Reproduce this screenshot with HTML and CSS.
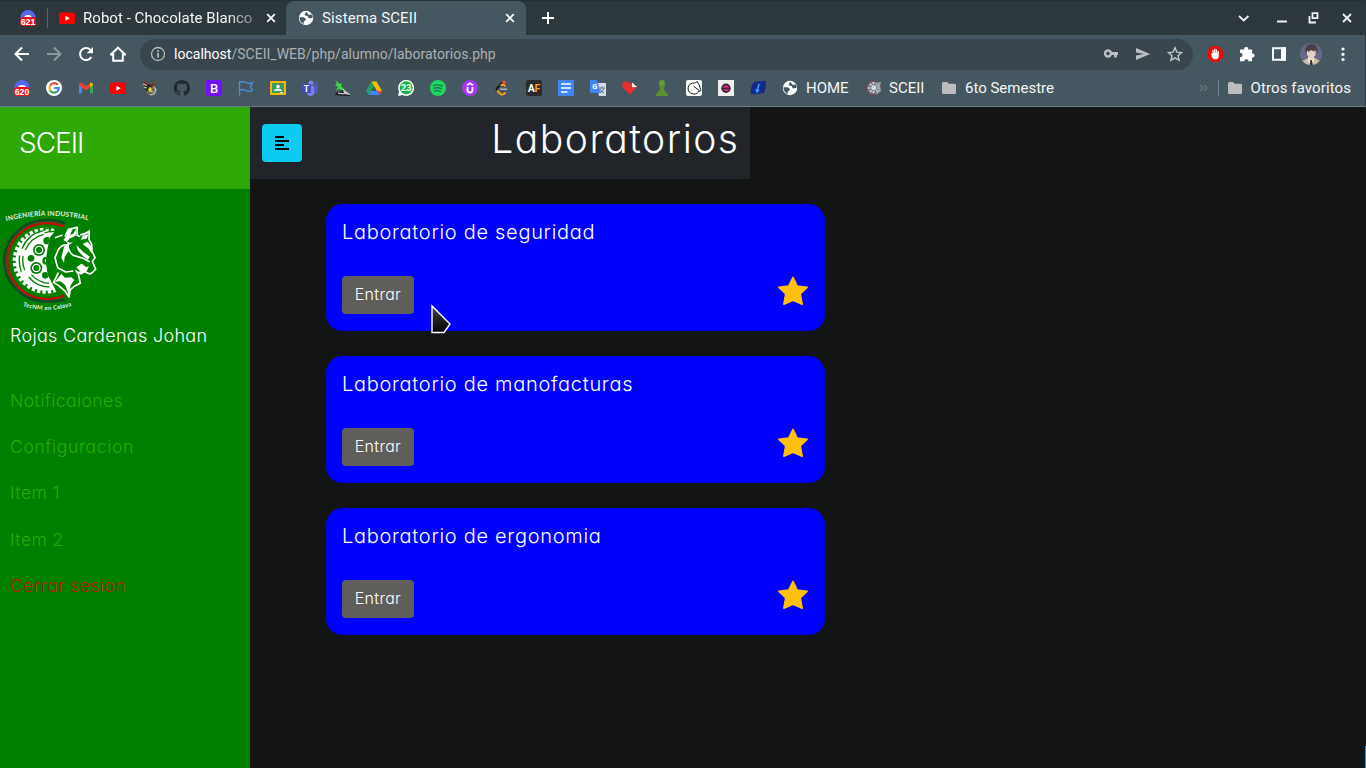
FILE: index.html
```html
<!DOCTYPE html>
<html lang="es">
<head>
<meta charset="utf-8">
<title>Sistema SCEII</title>
<link rel="stylesheet" href="styles.css">
</head>
<body>
<svg class="defs" width="0" height="0">
  <symbol id="globe" viewBox="0 0 16 16"><circle cx="8" cy="8" r="7.2" fill="#fff"/><path d="M1.500 7.200h4.200l2 1.600v1.400l-2 1.200v2.600C3.500 13 1.700 10.800 1.500 8zM8.500 1.700 6.500 4.300l.8 1.300 2.300.4 1.200 2.200h2.400l1.600-.8c-.2-1.300-.7-2.300-1.500-3.200l-2 .9-1-.5z" fill="#455760"/></symbol>
  <symbol id="folder" viewBox="0 0 16 16"><path d="M1 3.500Q1 2 2.500 2H6l1.700 1.700h6q1.300 0 1.300 1.300v7.500q0 1.500-1.500 1.500h-11Q1 14 1 12.500z" fill="#bdbdbd"/></symbol>
  <symbol id="youtube" viewBox="0 0 16 16"><rect y="2.500" width="16" height="11.500" rx="2.500" fill="#f00"/><path d="M6.400 5.700v5l4.400-2.500z" fill="#fff"/></symbol>
  <symbol id="star" viewBox="0 0 30 30"><path d="M15 1.300 19.200 9.900 29.200 11.200 22.300 18 24.200 28.200 15 24.200 5.800 28.200 7.700 18 .8 11.200 10.800 9.900z" fill="#ffc107" stroke="#ffc107" stroke-width="1.500" stroke-linejoin="round"/></symbol>
  <symbol id="discord" viewBox="0 0 16 16"><circle cx="8" cy="7.500" r="7.500" fill="#5865f2"/><path d="M4.500 6q3.500-2 7 0v3h-7z" fill="#fff"/><rect y="7" width="16" height="9" rx="3.200" fill="#e8111a"/></symbol>
</svg>

<header class="browser">
  <div class="tabs">
    <div class="pinned"><svg width="16" height="16"><use href="#discord"/><text x="8" y="14.500" class="badge">621</text></svg></div>
    <div class="tab tab-robot">
      <svg width="16" height="16"><use href="#youtube"/></svg>
      <span class="tab-name fade">Robot - Chocolate Blanco</span>
      <svg class="close" width="10" height="10" viewBox="0 0 10 10"><path d="M1.200 1.200l7.600 7.600m0-7.600L1.200 8.800"/></svg>
    </div>
    <div class="tab tab-active">
      <svg width="16" height="16"><use href="#globe"/></svg>
      <span class="tab-name sist">Sistema SCEII</span>
      <svg class="close" width="10" height="10" viewBox="0 0 10 10"><path d="M1.200 1.200l7.600 7.600m0-7.600L1.200 8.800"/></svg>
    </div>
    <svg class="plus" width="12" height="12" viewBox="0 0 12 12"><path d="M6 0v12M0 6h12"/></svg>
    <div class="window-controls">
      <svg width="122" height="20" viewBox="0 0 122 20"><g fill="none" stroke="#f1f3f4" stroke-width="1.800"><path d="M5 8l4.700 4.500L14.400 8M43 13.500h10"/><path d="M78.500 5.200h5v5h-5zM75.500 8v6.500h6.500"/><path d="M109 6l8 8m0-8l-8 8"/></g></svg>
    </div>
  </div>

  <div class="toolbar">
    <div class="nav">
      <svg width="16" height="16" viewBox="0 0 16 16"><path d="M15 8H2M8 1.500 1.500 8 8 14.500" class="ico"/></svg>
      <svg width="16" height="16" viewBox="0 0 16 16"><path d="M1 8h13M8 1.500 14.500 8 8 14.500" class="ico dim"/></svg>
      <svg width="16" height="16" viewBox="0 0 16 16"><path d="M13.300 11A6 6 0 1 1 12.300 3.800" class="ico"/><path d="M15 1v6.300H8.700z" fill="#fff"/></svg>
      <svg width="16" height="16" viewBox="0 0 16 16"><path d="M.9 8.500 8 1.700l7.100 6.800h-2.300v6.300H3.200V8.500z" class="ico"/></svg>
    </div>
    <div class="address">
      <svg width="16" height="16" viewBox="0 0 16 16"><circle cx="8" cy="8" r="6.500" fill="none" stroke="#b4babd" stroke-width="1.300"/><path d="M8 7v4.500M8 4.300V6" stroke="#c4c9cb" stroke-width="1.600"/></svg>
      <span class="url"><b>localhost</b>/SCEII_WEB/php/alumno/laboratorios.php</span>
      <div class="address-icons">
        <svg width="16" height="16" viewBox="0 0 16 16"><circle cx="5" cy="7.500" r="3" fill="none" stroke="#bcc1c3" stroke-width="2.400"/><path d="M8 7.500h7M12.500 8v3.500" stroke="#bcc1c3" stroke-width="2.800"/></svg>
        <svg width="16" height="16" viewBox="0 0 16 16"><path d="M1 2l14 6-14 6V9.500L9 8 1 6.500z" fill="#bcc1c3"/></svg>
        <svg width="16" height="16" viewBox="0 0 16 16"><path d="M8 1.800l1.900 4.400 4.700.4-3.600 3.100 1.100 4.600L8 11.900l-4.100 2.400L5 9.700 1.400 6.600l4.700-.4z" fill="none" stroke="#c4c8ca" stroke-width="1.400"/></svg>
      </div>
    </div>
    <div class="extensions">
      <svg width="16" height="16" viewBox="0 0 16 16"><path d="M4.700 0h6.600L16 4.700v6.600L11.300 16H4.700L0 11.300V4.700z" fill="#e50d0d"/><path d="M4 7.500q.8-.6 1.400.5V4.100q.8-.8 1.300 0V7h.4V2.900q.7-.8 1.300 0V7h.4V3.400q.8-.7 1.300 0v4h.4V5q.8-.7 1.300 0v4.500q0 4-3.700 4-2.500 0-3.300-2.700z" fill="#fff"/></svg>
      <svg width="16" height="16" viewBox="0 0 16 16"><path d="M1 3.500h4.200a2 2 0 1 1 3.900 0h4v4a2 2 0 1 1 0 3.900v3.900H9.500a2.100 2.100 0 1 0-4.200 0H1v-4.200a2.100 2.100 0 1 0 0-4.100z" fill="#fff"/></svg>
      <svg width="16" height="16" viewBox="0 0 16 16"><path d="M2 2.200h12v11.600H2z" fill="none" stroke="#fff" stroke-width="2"/><path d="M10 1.500h5v13h-5z" fill="#fff"/></svg>
      <svg width="22" height="22" viewBox="0 0 22 22"><clipPath id="av"><circle cx="11" cy="11" r="11"/></clipPath><g clip-path="url(#av)"><path fill="#67678a" d="M0 0h22v22H0z"/><path d="M1 22l1-4 6-3h7l5 3 1 4z" fill="#c9c0a2"/><path d="M8 14h6v5l-3 2-3-2z" fill="#f0dfd3"/><path d="M10.300 17h1.500l1 5h-3z" fill="#26344a"/><path d="M7 6h8.500v6L12 16h-1.500L7 12z" fill="#e9cfc1"/><path d="M5 10Q4 2 11 1t7 9l-2.500-3-1.500 1.500L11 7 8.500 9l-1-1.500z" fill="#4a4144"/></g></svg>
      <svg width="6" height="16" viewBox="0 0 6 16" fill="#fff"><circle cx="3" cy="3" r="1.600"/><circle cx="3" cy="8.300" r="1.600"/><circle cx="3" cy="13.600" r="1.600"/></svg>
    </div>
  </div>

  <div class="bookmarks">
    <svg viewBox="0 0 16 16"><use href="#discord"/><text x="8" y="14.500" class="badge">620</text></svg>
    <svg viewBox="0 0 16 16"><circle cx="8" cy="8" r="8" fill="#fff"/><g fill="none" stroke-width="2.200"><path d="M11.700 4.800A4.700 4.700 0 0 0 4 5.700" stroke="#ea4335"/><path d="M4 5.700a4.700 4.700 0 0 0 0 4.600" stroke="#fbbc04"/><path d="M4 10.300a4.700 4.700 0 0 0 7 1.300" stroke="#34a853"/><path d="M11 11.600A4.500 4.500 0 0 0 12.700 8H8.200" stroke="#4285f4"/></g></svg>
    <svg viewBox="0 0 16 16"><path d="M1 4v9.500h3V7z" fill="#4285f4"/><path d="M12 7v6.500h3V4z" fill="#34a853"/><path d="M1 4.500Q1.500 2 4 3l4 3.200L12 3v4.500l-4 3-7-5z" fill="#ea4335"/><path d="M12 3q3-.8 3 2l-3 2.500z" fill="#fbbc04"/></svg>
    <svg viewBox="0 0 16 16"><use href="#youtube"/></svg>
    <svg viewBox="0 0 16 16"><circle cx="9" cy="10" r="5.500" fill="#676860"/><path d="M0 2l3-.5 4 3.500 3-1 5-3.500-1 3-3 3-4-1-4 0z" fill="#8f2822"/><path d="M2 5l5-1 3 2-2 4-4 1z" fill="#20251c"/><path d="M1 4l4 1.500M2 7l3 1m7-1 2 3-2 4-4 1m1-4 2 1" stroke="#c9c9bb" fill="none" stroke-width="1.200"/><path d="M8 6.500l2 3-2 3-2-3z" fill="#e9d91f"/><path d="M12 3l3-2" stroke="#48782d" stroke-width="1.500"/></svg>
    <svg viewBox="0 0 16 16"><path fill="#24292f" d="M8 0C3.580 0 0 3.580 0 8c0 3.540 2.290 6.530 5.470 7.590.4.070.55-.17.55-.38v-1.490c-2.010.37-2.530-.49-2.690-.94-.090-.23-.48-.94-.82-1.130-.28-.15-.68-.52-.01-.53.63-.01 1.080.58 1.230.82.72 1.210 1.870.87 2.330.66.070-.52.28-.87.51-1.070-1.780-.2-3.640-.89-3.640-3.950 0-.87.31-1.590.82-2.150-.08-.2-.36-1.020.08-2.120 0 0 .67-.21 2.200.82a7.400 7.400 0 0 1 4 0c1.530-1.040 2.200-.82 2.200-.82.44 1.100.16 1.920.08 2.120.51.56.82 1.270.82 2.150 0 3.070-1.870 3.750-3.650 3.950.29.25.54.73.54 1.480v2.200c0 .21.150.46.55.38A8.010 8.010 0 0 0 16 8c0-4.420-3.580-8-8-8z"/></svg>
    <svg viewBox="0 0 16 16"><rect width="16" height="16" rx="2" fill="#7211f8"/><text x="8" y="12.600" class="mark medium" font-size="13">B</text></svg>
    <svg viewBox="0 0 16 16"><path d="M1.500 1v14.500M1.500 2.500q3.500-1.700 6.500 0t6.500 0l-2 4 2 4q-3.500 1.700-6.500 0t-6.500 0" fill="none" stroke="#4a8fe7" stroke-width="1.300"/></svg>
    <svg viewBox="0 0 16 16"><path fill="#f6b900" d="M0 1h16v14H0z"/><path fill="#3f9a62" d="M2 3h12v10H2z"/><circle cx="8" cy="6.500" r="1.700" fill="#fff"/><path d="M4 11q0-2.500 4-2.500t4 2.500z" fill="#d8f1e3"/><path fill="#d8dfd0" d="M10 12h3v1.500h-3z"/></svg>
    <svg viewBox="0 0 16 16"><circle cx="9" cy="3" r="2.500" fill="#7b83eb"/><circle cx="14" cy="4" r="1.700" fill="#5059c9"/><path d="M5 6h8v6q-1 4-4.500 4T5 12z" fill="#7b83eb"/><path d="M12 6h4v5q-1 3-4 2z" fill="#5059c9"/><path fill="#434bb5" d="M0 4h9v9H0z"/><text x="4.500" y="11.500" class="mark" font-size="8.500">T</text></svg>
    <svg viewBox="0 0 16 16"><path d="M1 0l5 4 2-1-1 3 4 4H8l-3-1-3 2 2-4L1 5l2-1z" fill="#3fdb45"/><path d="M1 15q1-4 5-3l3-2 2 3 5 1v2H9z" fill="#252525"/><path d="M9 9l4 3 3 2v1l-6-1z" fill="#c4c4c4"/><path d="M4 13l6 1" stroke="#eee"/></svg>
    <svg viewBox="0 0 16 16"><path d="M5.500 1.500h5L5 11l-2.500 4L0 11z" fill="#24a359"/><path d="M5.500 1.500h5L16 11h-5z" fill="#fbbc04"/><path d="M5 11h11l-2.500 4h-11z" fill="#4285f4"/><path d="M11 11h5l-2.500 4z" fill="#ea4335"/></svg>
    <svg viewBox="0 0 16 16"><path d="M0 16l1-4.500A8 8 0 1 1 4.500 15z" fill="#fff"/><circle cx="8.200" cy="7.800" r="6.500" fill="#12b84f"/><text x="8.200" y="11" class="mark" font-size="9">23</text></svg>
    <svg viewBox="0 0 16 16"><circle cx="8" cy="8" r="8" fill="#1ed760"/><path d="M3 5.600q5-1.600 10 .7M3.500 8.300q4.500-1.400 8.500.7M4 10.900q3.500-1 7 .7" stroke="#24704a" stroke-width="1.300" fill="none"/></svg>
    <svg viewBox="0 0 16 16"><circle cx="8" cy="8" r="8" fill="#a435f0"/><path d="M5 5.300l3-2 3 2M5.500 7v3q0 2.500 2.500 2.500t2.500-2.500V7" fill="none" stroke="#fff" stroke-width="1.800"/></svg>
    <svg viewBox="0 0 16 16"><path d="M9.500 1.500 3 8q-1 1.500 0 3" fill="none" stroke="#191919" stroke-width="1.800"/><path d="M3 10.500 6.500 14q2 1.500 4-.5l1-1M6.500 5.500q3-2 5 1" fill="none" stroke="#f5a31a" stroke-width="1.800"/><path d="M6 9.200h7" stroke="#b3b3b3" stroke-width="1.600"/><circle cx="10" cy="2.200" r="2" fill="#d9534f"/></svg>
    <svg viewBox="0 0 16 16"><rect width="16" height="16" rx="2.500" fill="#2a2a2a"/><text x="5.300" y="12" class="mark" font-size="10.500">A</text><text x="11.500" y="12" class="mark orange" font-size="10.500">F</text></svg>
    <svg viewBox="0 0 16 16"><rect width="16" height="16" rx="1" fill="#4285f4"/><path d="M3 4h10M3 8h10M3 12h6.500" stroke="#fff" stroke-width="1.700"/></svg>
    <svg viewBox="0 0 16 16"><path fill="#d7dce0" d="M7 3h9v13H9z"/><path d="M9.500 8H15M12 6.500V8m2 0q-1 4-4 5m0-4q1 3 4 4" stroke="#61747f" fill="none"/><path d="M0 0h7l4 13H1l-1-1z" fill="#4285f4"/><text x="4.700" y="9" class="mark" font-size="7.500">G</text></svg>
    <svg viewBox="0 0 16 16"><path d="M8 14.500 1 8Q-1.500 3 3 1.500q3-.7 5 2 3-2 7 3.500z" fill="#e92e2e"/><path d="M10 2.500v4.700l5-.2z" fill="#fff"/></svg>
    <svg viewBox="0 0 16 16"><circle cx="8" cy="3" r="3" fill="#679b38"/><path d="M4 5.500h8L10 7.500q0 3.500 4 6.500v2H2v-2q4-3 4-6.500z" fill="#5a8f31"/></svg>
    <svg viewBox="0 0 16 16"><rect width="16" height="16" rx="2" fill="#fff"/><path d="M13 4.500 11 1.500 9.500 3Q3 2.500 2 8q0 5 5 6 5 .5 6-3.500L7.500 6M13 4.500l2 6-2 1" fill="none" stroke="#222" stroke-width="1"/></svg>
    <svg viewBox="0 0 16 16"><path fill="#f3eeee" d="M0 0h16v16H0z"/><circle cx="8" cy="8.300" r="4.700" fill="#322732"/><circle cx="8" cy="8.300" r="3" fill="#d12c81"/><path d="M5 8.500h6" stroke="#521b3b" stroke-width="1.500"/></svg>
    <svg viewBox="0 0 16 16"><path d="M4 2q6-1 12-1 0 7-2 12-6 1.500-13 1Q0 7 4 2z" fill="#17298a"/><path d="M9 4l-2 8m-1-3 1 3 2-2" stroke="#399ff8" stroke-width="1.500" fill="none"/></svg>
    <div class="bookmark home"><svg width="16" height="16"><use href="#globe"/></svg><span>HOME</span></div>
    <div class="bookmark sceii"><svg viewBox="0 0 16 16"><circle cx="7.500" cy="8" r="7" fill="#747d80" stroke="#743c42"/><path d="M7.500 2v12M2 8h11M4 4l8 8m0-8-8 8" stroke="#dce1e1" stroke-width="1.600" stroke-dasharray="2 1"/><path d="M9 3l6-1-1 4 1 5-5 4 2-6z" fill="#9da6a9"/></svg><span>SCEII</span></div>
    <div class="bookmark sixth"><svg width="16" height="16"><use href="#folder"/></svg><span>6to Semestre</span></div>
    <div class="others"><svg width="9" height="8" viewBox="0 0 9 8"><path d="M1 1l3 3-3 3m4-6 3 3-3 3" fill="none" stroke="#66737a" stroke-width="1.500"/></svg><i></i><svg width="16" height="16"><use href="#folder"/></svg><span>Otros favoritos</span></div>
  </div>
</header>

<div class="page">
  <aside class="sidebar">
    <div class="brand"><span>SCEII</span></div>
    <svg class="logo" viewBox="0 0 330 360" role="img">
      <path id="top-arc" d="M19 64Q140 30 278 64" fill="none"/>
      <path id="low-arc" d="M68 318Q148 344 223 314" fill="none"/>
      <text class="logo-top"><textPath href="#top-arc" textLength="248">INGENIERÍA INDUSTRIAL</textPath></text>
      <text class="logo-low"><textPath href="#low-arc" textLength="150">TecNM en Celaya</textPath></text>
      <path d="M195 70Q170 60 140 60C70 60 13 115 13 183S70 305 140 305Q170 305 195 299" fill="none" stroke="#0d4a28" stroke-width="8"/>
      <path d="M193 80Q168 69 140 69C76 69 22 120 22 183S76 297 140 297Q168 297 193 286" fill="none" stroke="#bd100a" stroke-width="7"/>
      <clipPath id="half"><path d="M0 60h172l-8 35-15 18-6 30-6 39 6 42 15 29 16 33-5 30H0z"/></clipPath>
      <g clip-path="url(#half)">
        <circle cx="137" cy="182" r="90" fill="#fff"/>
        <circle cx="137" cy="182" r="92" fill="none" stroke="#fff" stroke-width="14" stroke-dasharray="10 6"/>
        <g fill="none" stroke="#008000" stroke-width="4"><path d="M66 146q17-43 64-54M76 150q15-36 55-47M59 167q-4 24 5 48M69 168q-3 23 5 43M86 231q25 30 62 30M94 224q23 25 53 26M132 88q20-7 40-4M133 99q18-7 39-3"/></g>
        <g fill="#008000"><circle cx="117" cy="150" r="18"/><circle cx="109" cy="204" r="18"/><circle cx="93" cy="175" r="10"/><circle cx="141" cy="122" r="11"/><circle cx="136" cy="226" r="10"/><circle cx="139" cy="182" r="12"/></g>
        <g fill="none" stroke="#fff" stroke-width="4"><circle cx="117" cy="150" r="11"/><circle cx="109" cy="204" r="11"/></g>
        <circle cx="139" cy="182" r="5" fill="#fff"/>
      </g>
      <g fill="none" stroke="#fff" stroke-width="5" stroke-linejoin="round">
        <path d="M165 113l23-8M195 110l10-22 27-6-1 24 9 4M240 104q15 0 28-11l-1 26 8 14 1 20 9 20-8 11 10 23-8 9-9 6-14-6-10-13 2-10"/>
        <path d="M205 135q-21-3-31 16l-9 22 8 30 24 13 23-3M205 126q-5 25 15 40l30 9 19 11M175 218q-7 15-14 29l15 10 19 16 12 18 4-22 12-10 18-9-6-29-8-10"/>
      </g>
      <path d="M205 88l-6 21-9 11 10 7 8-11 19-9 3-24-9 17-11 6 9-21zM192 140l16-12 11-1-13 9-1 18-11 17-2 17-8-15zM229 135l20 20 20 15-5 9-16-12-14-15zM248 108l19-6-8 14-17 3zM229 202l15-11 14 10 9-2-7 15-17 10-13-10 12 1zM184 222l11 11 19-1 9 8-11 16-6 28-10-28-15-12-16 1zM262 125l14 15-1 21-9-15-18-14z" fill="#fff"/>
    </svg>
    <p class="student">Rojas Cardenas Johan</p>
    <nav class="menu">
      <a>Notificaiones</a>
      <a class="conf">Configuracion</a>
      <a>Item 1</a>
      <a>Item 2</a>
      <a class="logout">Cerrar sesion</a>
    </nav>
  </aside>

  <main class="content">
    <div class="topbar">
      <button class="toggle"><svg width="14" height="14" viewBox="0 0 14 14"><path d="M0 1h9M0 5h14M0 9h9M0 13h14" stroke="#000" stroke-width="2"/></svg></button>
      <h1>Laboratorios</h1>
    </div>
    <div class="cards">
      <section class="card">
        <h2>Laboratorio de seguridad</h2>
        <div class="row"><button class="enter">Entrar</button><svg width="30" height="30"><use href="#star"/></svg></div>
      </section>
      <section class="card">
        <h2>Laboratorio de manofacturas</h2>
        <div class="row"><button class="enter">Entrar</button><svg width="30" height="30"><use href="#star"/></svg></div>
      </section>
      <section class="card">
        <h2>Laboratorio de ergonomia</h2>
        <div class="row"><button class="enter">Entrar</button><svg width="30" height="30"><use href="#star"/></svg></div>
      </section>
    </div>
  </main>
  <div class="edge"></div>
</div>
<svg class="cursor" width="24" height="32" viewBox="0 0 24 32"><defs><linearGradient id="cg" x2="0" y2="1"><stop stop-color="#444"/><stop offset="1"/></linearGradient></defs><path d="M2 2v26.500h12l6-8.500z" fill="url(#cg)" stroke="#fff" stroke-width="1.400"/></svg>
</body>
</html>
```
FILE: styles.css
```css
* { box-sizing: border-box; }
body { margin: 0; width: 1366px; height: 768px; overflow: hidden; background: #131514; font-family: Inter, "Liberation Sans", sans-serif; font-weight: 300; }
svg { display: block; flex: none; }
.defs { position: absolute; }
h1, h2, p { margin: 0; font-weight: 300; }
button { border: 0; padding: 0; font: inherit; }

.browser { height: 107px; background: #455760; border-bottom: 1px solid #6d7d85; border-right: 1px solid #2b373d; font-family: Roboto, sans-serif; font-weight: 400; color: #f5f6f6; }
.tabs { height: 35px; display: flex; align-items: center; background: #2d383d; border-top: 1px solid #263035; }
.pinned { width: 48px; height: 20px; padding: 2px 0 0 20px; border-right: 1px solid #59666c; }
.tab { height: 34px; display: flex; align-items: center; font-size: 15px; }
.tab-robot { width: 238px; padding-left: 11px; }
.tab-active { width: 240px; padding-left: 12px; background: #455760; border-radius: 8px 8px 0 0; }
.tab-name { margin-left: 8px; white-space: nowrap; }
.fade { width: 171px; letter-spacing: .04px; -webkit-mask-image: linear-gradient(90deg, #000 84%, rgba(0, 0, 0, .35)); mask-image: linear-gradient(90deg, #000 84%, rgba(0, 0, 0, .35)); }
.sist { width: 171px; letter-spacing: .12px; }
.close { margin-left: 12px; fill: none; stroke: #fff; stroke-width: 1.800; }
.plus { margin-left: 16px; stroke: #fff; stroke-width: 2; }
.window-controls { margin-left: auto; margin-right: 9px; }
.badge { font: 700 8.800px "Liberation Sans", sans-serif; fill: #fff; text-anchor: middle; }
.mark { font-family: Roboto, sans-serif; font-weight: 700; fill: #fff; text-anchor: middle; }
.medium { font-weight: 500; }
.orange { fill: #ffa116; }

.toolbar { height: 35px; margin-top: 2px; display: flex; align-items: center; }
.nav { width: 140px; display: flex; gap: 16px; padding-left: 14px; }
.ico { fill: none; stroke: #fff; stroke-width: 2; }
.dim { stroke: #8d989d; }
.address { width: 1053px; height: 31px; border-radius: 16px; background: #39464d; display: flex; align-items: center; padding: 0 10px; }
.toolbar > div { margin-bottom: 1px; }
.url { margin-left: 8px; font-size: 14px; color: #aab1b4; letter-spacing: .02px; }
.url b { font-weight: 400; color: #fff; }
.address-icons { margin-left: auto; display: flex; gap: 16px; }
.extensions { display: flex; align-items: center; gap: 16px; margin-left: 14px; }
.extensions svg:nth-child(4) { margin-left: -3px; }
.extensions svg:nth-child(5) { margin-left: 2px; }

.bookmarks { height: 32px; display: flex; align-items: center; gap: 16px; padding-left: 14px; font-size: 15px; }
.bookmarks > svg, .bookmark svg { width: 16px; height: 16px; }
.bookmark { display: flex; align-items: center; gap: 8px; white-space: nowrap; }
.home { width: 68px; }
.sceii { width: 59px; gap: 7px; }
.others { margin-left: auto; padding-right: 14px; display: flex; align-items: center; gap: 8px; white-space: nowrap; letter-spacing: .1px; }
.others i { width: 1px; height: 16px; background: #74828a; margin-left: 2px; }

.page { display: flex; height: 661px; }
.sidebar { width: 250px; background: #008000; color: #fff; }
.brand { height: 82px; background: #2ea806; padding: 20px 19px; font-size: 28px; line-height: 33px; letter-spacing: -1px; }
.logo { width: 110px; height: 120px; margin-top: 11px; }
.logo text { fill: #e5f2e5; font-family: Lato, sans-serif; font-weight: 700; }
.logo .logo-top { font-size: 20px; }
.logo .logo-low { font-size: 18px; }
.student { padding-left: 10px; height: 30px; line-height: 32px; font-size: 18px; letter-spacing: .3px; font-feature-settings: "cv11"; }
.menu { padding-top: 28px; display: flex; flex-direction: column; font-feature-settings: "cv11"; letter-spacing: .45px; }
.menu a { height: 46.200px; padding-left: 10px; line-height: 46px; font-size: 17.500px; color: #2ea806; }
.menu .conf { letter-spacing: .65px; }
.menu .logout { color: #bd1a0c; }

.content { width: 1115px; }
.topbar { width: 500px; height: 72px; background: #212529; display: flex; justify-content: space-between; padding: 0 12px; color: #fff; }
.toggle { width: 40px; height: 38px; margin-top: 17px; border-radius: 4px; background: #0dcaf0; display: grid; place-items: center; }
.topbar h1 { font-size: 39px; line-height: 64px; font-feature-settings: "cv11"; letter-spacing: 1.500px; margin-right: -1.500px; }
.cards { width: 499px; margin: 25px 0 0 76px; display: flex; flex-direction: column; gap: 25px; }
.card { height: 127px; border-radius: 16px; background: #00f; border: 1px solid #0202dc; padding: 15px; color: #fff; font-feature-settings: "cv11"; }
.card h2 { font-size: 20px; line-height: 24px; letter-spacing: .7px; }
.row { display: flex; justify-content: space-between; margin-top: 32px; padding-right: 1px; }
.enter { width: 72px; height: 38px; padding-bottom: 2px; border-radius: 4px; background: #5f5e5b; color: #fff; font-size: 16px; letter-spacing: .3px; font-feature-settings: "cv11"; }
.edge { width: 1px; height: 22px; align-self: flex-end; background: #3a8fd0; }
.cursor { position: absolute; left: 430px; top: 304px; }
```
